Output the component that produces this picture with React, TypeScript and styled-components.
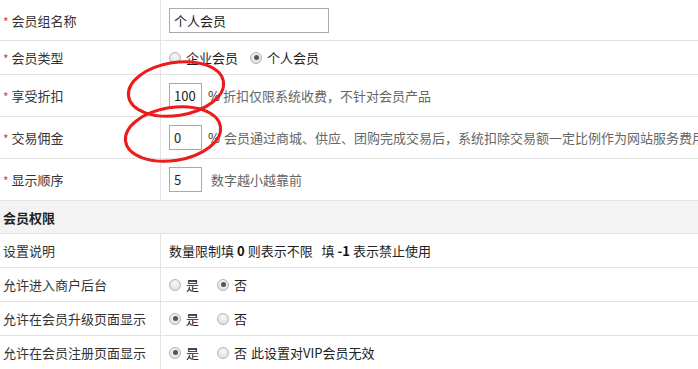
import styled, { createGlobalStyle } from 'styled-components'

const GlobalStyle = createGlobalStyle`
    html, body {
        margin: 0;
        padding: 0;
        background: #fff;
        overflow: hidden;
    }
    body {
        font-family: "Noto Sans CJK SC", "Liberation Sans", sans-serif;
        font-size: 13px;
        color: #333;
    }
`

const Page = styled.div`
    position: relative;
    width: 900px;
`

const Table = styled.div`
    display: flex;
    flex-direction: column;
`

const Row = styled.div<{ $h: number; $head?: boolean }>`
    display: grid;
    grid-template-columns: 161px 1fr;
    height: ${props => props.$h}px;
    box-sizing: border-box;
    border-bottom: 1px solid #e3e3e3;
    background: ${props => props.$head ? "#f3f3f3" : "#fff"};
`

const Label = styled.div`
    display: flex;
    align-items: center;
    padding-left: 3px;
    border-right: 1px solid #e3e3e3;
    white-space: nowrap;
`

const Star = styled.span`
    color: #e4393c;
    margin-right: 3px;
    font-size: 12px;
    position: relative;
    top: 1px;
`

const HeadCell = styled.div`
    grid-column: 1 / 3;
    display: flex;
    align-items: center;
    padding-left: 3px;
    font-weight: bold;
    color: #222;
`

const Field = styled.div`
    display: flex;
    align-items: center;
    padding-left: 8px;
    white-space: nowrap;
`

const TextInput = styled.input<{ $w: number }>`
    box-sizing: border-box;
    width: ${props => props.$w}px;
    height: 25px;
    border: 1px solid #a9a9a9;
    padding: 0 0 0 4px;
    font-family: "Noto Sans CJK SC", "Liberation Sans", sans-serif;
    font-size: 13px;
    color: #222;
    outline: none;
`

const Unit = styled.span`
    margin-left: 6px;
    color: #333;
`

const Hint = styled.span<{ $gap?: number }>`
    margin-left: ${props => props.$gap ?? 3}px;
    color: #666;
`

const Choice = styled.label<{ $gap?: number }>`
    display: flex;
    align-items: center;
    margin-right: ${props => props.$gap ?? 10}px;
    color: #222;
`

const Radio = styled.span<{ $on?: boolean }>`
    box-sizing: border-box;
    width: 12px;
    height: 12px;
    margin-right: 5px;
    border-radius: 50%;
    border: 1px solid #b5b5b5;
    background: radial-gradient(circle at 50% 35%, #fafafa 0%, #e2e2e2 70%, #d4d4d4 100%);
    position: relative;

    &::after {
        content: "";
        display: ${props => props.$on ? "block" : "none"};
        position: absolute;
        left: 2.5px;
        top: 2.5px;
        width: 5px;
        height: 5px;
        border-radius: 50%;
        background: #555;
    }
`

const Note = styled.span`
    color: #222;

    & b {
        color: #111;
        margin: 0 3px;
    }
`

const Marks = styled.svg`
    position: absolute;
    left: 0;
    top: 0;
    pointer-events: none;
`

const Req = ({ text }: { text: string }) => (
    <Label><Star>*</Star>{text}</Label>
)

const YesNo = ({ yes, extra }: { yes: boolean; extra?: string }) => (
    <Field>
        <Choice $gap={18}><Radio $on={yes} />是</Choice>
        <Choice $gap={4}><Radio $on={!yes} />否</Choice>
        {extra && <Note>{extra}</Note>}
    </Field>
)

export default function App() {
    return (
        <Page>
            <GlobalStyle />
            <Table>
                <Row $h={41}>
                    <Req text="会员组名称" />
                    <Field><TextInput $w={160} defaultValue="个人会员" /></Field>
                </Row>
                <Row $h={34}>
                    <Req text="会员类型" />
                    <Field>
                        <Choice $gap={12}><Radio />企业会员</Choice>
                        <Choice><Radio $on />个人会员</Choice>
                    </Field>
                </Row>
                <Row $h={42}>
                    <Req text="享受折扣" />
                    <Field>
                        <TextInput $w={33} defaultValue="100" />
                        <Unit>%</Unit>
                        <Hint>折扣仅限系统收费，不针对会员产品</Hint>
                    </Field>
                </Row>
                <Row $h={42}>
                    <Req text="交易佣金" />
                    <Field>
                        <TextInput $w={33} defaultValue="0" />
                        <Unit>%</Unit>
                        <Hint $gap={4}>会员通过商城、供应、团购完成交易后，系统扣除交易额一定比例作为网站服务费用</Hint>
                    </Field>
                </Row>
                <Row $h={42}>
                    <Req text="显示顺序" />
                    <Field>
                        <TextInput $w={33} defaultValue="5" />
                        <Hint $gap={9}>数字越小越靠前</Hint>
                    </Field>
                </Row>
                <Row $h={33} $head>
                    <HeadCell>会员权限</HeadCell>
                </Row>
                <Row $h={34}>
                    <Label>设置说明</Label>
                    <Field>
                        <Note>数量限制填<b>0</b>则表示不限&nbsp;&nbsp;&nbsp;填<b>-1</b>表示禁止使用</Note>
                    </Field>
                </Row>
                <Row $h={34}>
                    <Label>允许进入商户后台</Label>
                    <YesNo yes={false} />
                </Row>
                <Row $h={34}>
                    <Label>允许在会员升级页面显示</Label>
                    <YesNo yes />
                </Row>
                <Row $h={34}>
                    <Label>允许在会员注册页面显示</Label>
                    <YesNo yes extra="此设置对VIP会员无效" />
                </Row>
            </Table>
            <Marks width={260} height={180} viewBox="0 0 260 180">
                <ellipse cx={176} cy={89} rx={48} ry={26.5} transform="rotate(-9 176 89)"
                    fill="none" stroke="#ea1c1c" strokeWidth={3} />
                <ellipse cx={173} cy={134} rx={48} ry={26.5} transform="rotate(-9 173 134)"
                    fill="none" stroke="#ea1c1c" strokeWidth={3} />
            </Marks>
        </Page>
    )
}
